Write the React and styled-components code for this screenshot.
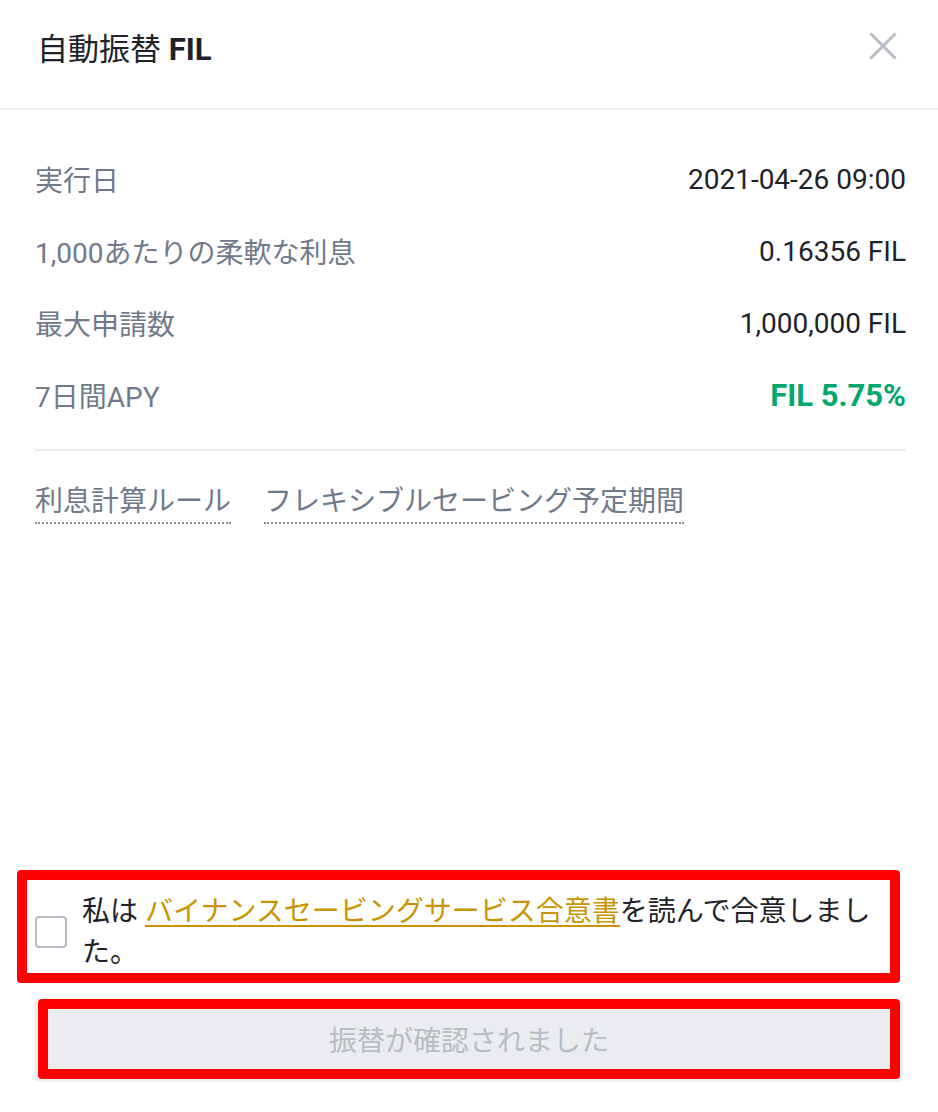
import React from "react";
import styled, { createGlobalStyle } from "styled-components";

const GlobalStyle = createGlobalStyle`
  html, body {
    margin: 0;
    padding: 0;
    background: #ffffff;
  }
  body {
    font-family: Roboto, "Noto Sans CJK JP", sans-serif;
    color: #1e2329;
  }
`;

const rows = [
  { label: "実行日", value: "2021-04-26 09:00" },
  { label: "1,000あたりの柔軟な利息", value: "0.16356 FIL" },
  { label: "最大申請数", value: "1,000,000 FIL" },
  { label: "7日間APY", value: "FIL 5.75%", accent: true },
];

const App = () => {
  return (
    <>
      <GlobalStyle />
      <Page>
        <Header>
          <Title>
            自動振替 <strong>FIL</strong>
          </Title>
          <CloseButton aria-label="close">
            <svg width="28" height="28" viewBox="0 0 28 28">
              <path
                d="M1.5 1.5 L26.5 26.5 M26.5 1.5 L1.5 26.5"
                stroke="#b7bdc6"
                strokeWidth="3"
                fill="none"
              />
            </svg>
          </CloseButton>
        </Header>

        <Body>
          <InfoList>
            {rows.map((r) => (
              <Row key={r.label}>
                <Label>{r.label}</Label>
                <Value $accent={r.accent}>{r.value}</Value>
              </Row>
            ))}
          </InfoList>
          <Divider />
          <Links>
            <DottedLink>利息計算ルール</DottedLink>
            <DottedLink>フレキシブルセービング予定期間</DottedLink>
          </Links>
        </Body>

        <Footer>
          <AgreementBox>
            <Checkbox />
            <AgreeText>
              私は <GoldLink>バイナンスセービングサービス合意書</GoldLink>を読んで合意しました。
            </AgreeText>
          </AgreementBox>
          <ConfirmButton disabled>振替が確認されました</ConfirmButton>
        </Footer>
      </Page>
    </>
  );
};

const Page = styled.div`
  display: flex;
  flex-direction: column;
  min-height: 100vh;
  box-sizing: border-box;
`;

const Header = styled.div`
  height: 110px;
  box-sizing: border-box;
  padding: 0 41px 16px 37px;
  display: flex;
  align-items: center;
  justify-content: space-between;
  border-bottom: 2px solid #eaecef;
`;

const Title = styled.div`
  font-size: 31px;
  font-weight: 400;
  color: #1e2329;

  strong {
    font-weight: 700;
  }
`;

const CloseButton = styled.div`
  width: 28px;
  height: 28px;
  display: flex;

  svg {
    display: block;
  }
`;

const Body = styled.div`
  padding: 33px 32px 0 35px;
`;

const InfoList = styled.div`
  display: flex;
  flex-direction: column;
`;

const Row = styled.div`
  height: 72px;
  display: flex;
  align-items: center;
  justify-content: space-between;
  font-size: 28px;
`;

const Label = styled.span`
  color: #707a8a;
`;

const Value = styled.span`
  color: ${(p) => (p.$accent ? "#03a66d" : "#1e2329")};
  font-weight: ${(p) => (p.$accent ? 700 : 400)};
  font-size: ${(p) => (p.$accent ? "31px" : "28px")};
`;

const Divider = styled.div`
  margin-top: 18px;
  height: 2px;
  background: #eaecef;
`;

const Links = styled.div`
  margin-top: 31px;
  display: flex;
  gap: 33px;
`;

const DottedLink = styled.span`
  display: inline-block;
  font-size: 28px;
  line-height: 40px;
  color: #707a8a;
  border-bottom: 2px dotted #848e9c;
`;

const Footer = styled.div`
  margin-top: auto;
  padding: 0 38px 33px 17px;
  display: flex;
  flex-direction: column;
`;

const AgreementBox = styled.div`
  border: 10px solid #ff0000;
  border-radius: 4px;
  padding: 11px 0 0 8px;
  display: flex;
  align-items: center;
  gap: 15px;
`;

const Checkbox = styled.div`
  flex: none;
  width: 32px;
  height: 32px;
  box-sizing: border-box;
  border: 2px solid #b7bdc6;
  border-radius: 4px;
`;

const AgreeText = styled.div`
  font-size: 28px;
  line-height: 41px;
  color: #1e2329;
`;

const GoldLink = styled.span`
  color: #c99400;
  text-decoration: underline;
  text-decoration-thickness: 2px;
  text-underline-offset: 4px;
`;

const ConfirmButton = styled.button`
  margin: 16px 0 0 21px;
  height: 80px;
  border: 10px solid #ff0000;
  border-radius: 4px;
  background: #eaecef;
  box-shadow: -3px 3px 0 0 #eceef1, 3px 3px 0 0 #eceef1;
  font-family: inherit;
  font-size: 28px;
  color: #b7bdc6;
  cursor: not-allowed;
`;

export default App;
